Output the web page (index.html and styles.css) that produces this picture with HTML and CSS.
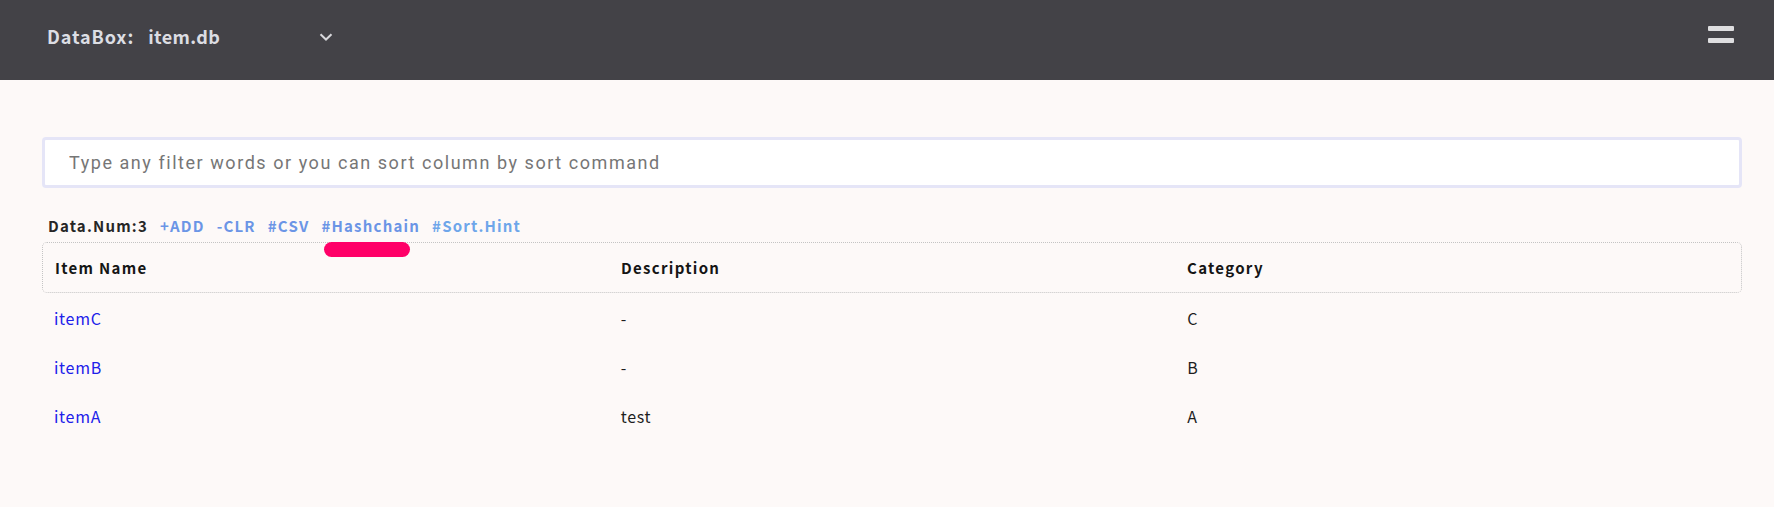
FILE: index.html
```html
<!DOCTYPE html>
<html lang="en">
<head>
<meta charset="utf-8">
<title>DataBox</title>
<link rel="stylesheet" href="styles.css">
</head>
<body>
<header class="topbar">
  <div class="brand">DataBox:</div>
  <div class="db-select">
    <span class="db-name">item.db</span>
    <svg class="chevron" width="14" height="8" viewBox="0 0 14 8"><path d="M1.5 1.2 L7 6.5 L12.5 1.2" fill="none" stroke="#d8d8dc" stroke-width="2"/></svg>
  </div>
  <div class="menu-btn"><span class="bar"></span><span class="bar"></span></div>
</header>
<main class="content">
  <div class="filter">
    <input class="filter-input" type="text" placeholder="Type any filter words or you can sort column by sort command">
  </div>
  <div class="toolbar">
    <span class="count">Data.Num:3</span>
    <a class="cmd">+ADD</a>
    <a class="cmd">-CLR</a>
    <a class="cmd">#CSV</a>
    <a class="cmd marked">#Hashchain<span class="marker"></span></a>
    <a class="cmd hint">#Sort.Hint</a>
  </div>
  <div class="table">
    <div class="thead">
      <div class="th">Item Name</div>
      <div class="th">Description</div>
      <div class="th">Category</div>
    </div>
    <div class="tbody">
      <div class="tr"><div class="td"><a class="item">itemC</a></div><div class="td">-</div><div class="td">C</div></div>
      <div class="tr"><div class="td"><a class="item">itemB</a></div><div class="td">-</div><div class="td">B</div></div>
      <div class="tr"><div class="td"><a class="item">itemA</a></div><div class="td">test</div><div class="td">A</div></div>
    </div>
  </div>
</main>
</body>
</html>
```
FILE: styles.css
```css
* { box-sizing: border-box; }
html, body { margin: 0; padding: 0; }
body {
  background: #fdf9f8;
  font-family: "Noto Sans CJK JP", "Noto Sans", sans-serif;
  color: #222;
  height: 507px;
  overflow: hidden;
}
.topbar {
  height: 80px;
  background: #434247;
  display: flex;
  align-items: center;
  padding: 0 40px 8px 47px;
}
.brand {
  color: #dcdee4;
  font-size: 18px;
  font-weight: 700;
  letter-spacing: 0.9px;
  line-height: 24px;
  margin-right: 14px;
}
.db-select {
  display: flex;
  align-items: center;
  width: 185px;
  justify-content: space-between;
}
.db-name {
  color: #dcdde2;
  font-size: 18px;
  font-weight: 700;
  letter-spacing: 0.4px;
  line-height: 24px;
}
.chevron { display: block; margin-top: 1px; }
.menu-btn {
  margin-left: auto;
  display: flex;
  flex-direction: column;
  gap: 7px;
  margin-top: -3px;
}
.bar {
  display: block;
  width: 26px;
  height: 5px;
  background: #dedee0;
  border-radius: 1px;
}
.content {
  padding: 57px 32px 0 42px;
}
.filter-input {
  display: block;
  width: 100%;
  height: 51px;
  border: 3px solid #e5e5f7;
  border-radius: 4px;
  background: #fff;
  padding: 0 24px;
  font-family: Roboto, "Liberation Sans", sans-serif;
  font-size: 18px;
  letter-spacing: 1.55px;
  color: #333;
  outline: none;
}
.filter-input::placeholder { color: #767676; }
.toolbar {
  display: flex;
  align-items: center;
  gap: 12px;
  margin-top: 27px;
  padding-left: 6px;
  font-size: 15px;
  font-weight: 700;
  line-height: 22px;
  letter-spacing: 1.2px;
}
.count { color: #262626; }
.cmd { color: #6b95e6; cursor: pointer; }
.cmd.hint { color: #6ea6ea; }
.marked { position: relative; }
.marker {
  position: absolute;
  left: 3px;
  top: 27px;
  width: 86px;
  height: 15px;
  border-radius: 8px;
  background: #ff0068;
}
.table { margin-top: 5px; }
.thead {
  display: grid;
  grid-template-columns: repeat(3, 1fr);
  border: 1px dotted #c4c4c4;
  border-radius: 5px;
}
.th {
  padding-left: 12px;
  font-size: 15px;
  font-weight: 700;
  line-height: 49px;
  letter-spacing: 1.3px;
  color: #151515;
}
.tbody { padding-top: 1px; }
.tr {
  display: grid;
  grid-template-columns: repeat(3, 1fr);
}
.td {
  padding-left: 12px;
  font-size: 16px;
  line-height: 49px;
  letter-spacing: 0.7px;
  color: #1e1e1e;
}
.item { color: #2020ea; cursor: pointer; }
```
